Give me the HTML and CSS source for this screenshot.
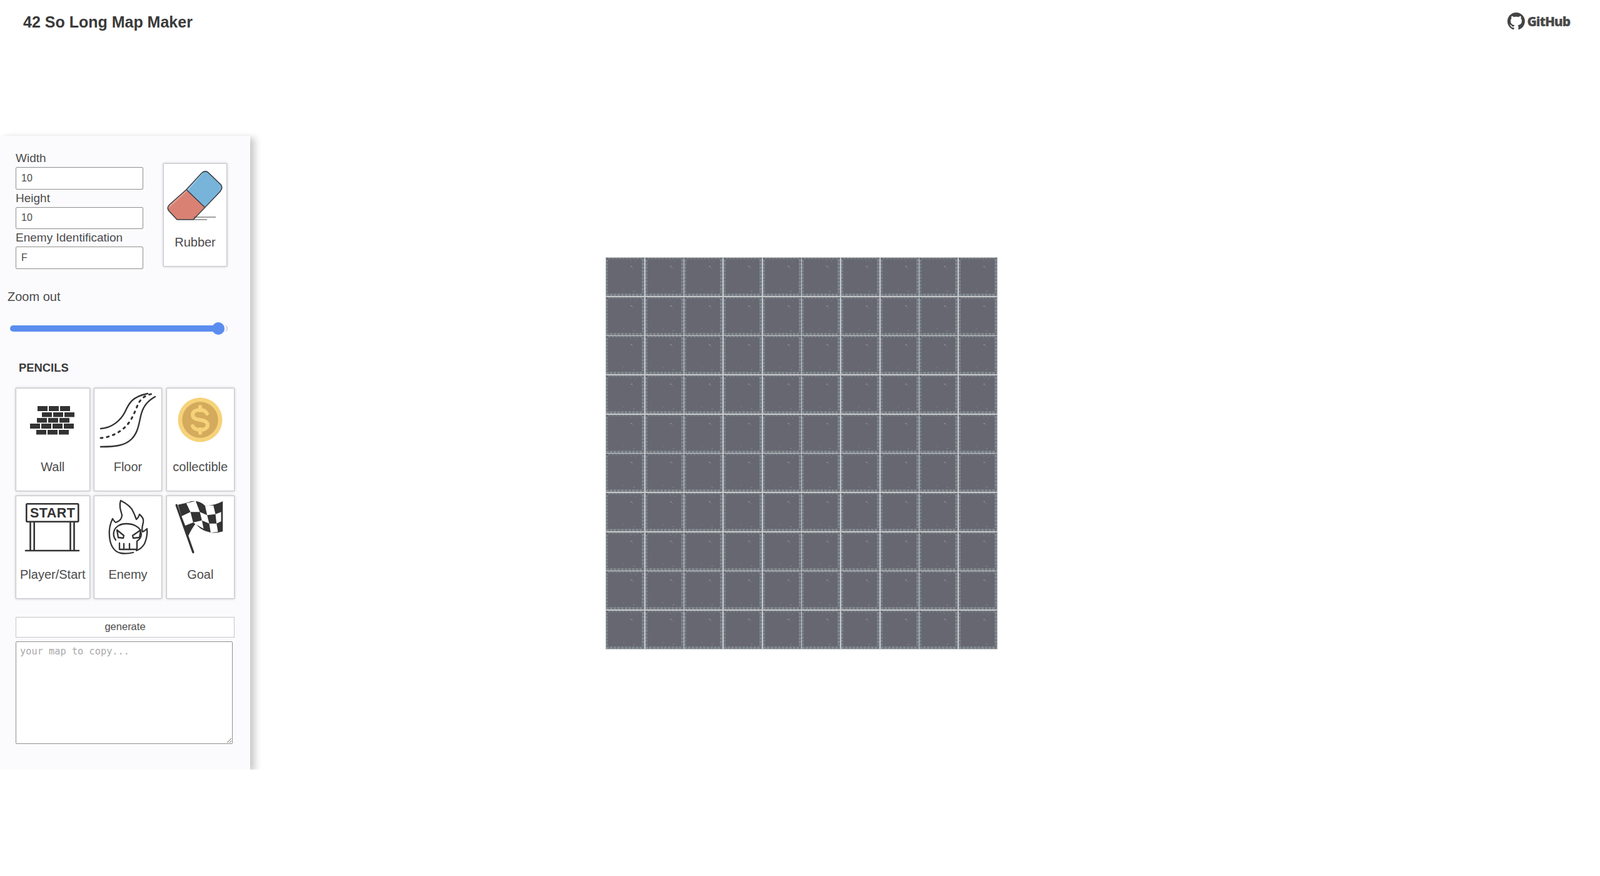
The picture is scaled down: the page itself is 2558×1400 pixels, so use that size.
FILE: index.html
```html
<!DOCTYPE html>
<html>
<head>
<title>42 So Long Map Maker</title>
<meta charset="UTF-8">
<link rel="stylesheet" href="styles.css">
</head>
<body>
  <svg class="defs" width="0" height="0">
    <symbol id="tile" viewBox="0 0 61 61">
      <rect width="61" height="61" fill="#666771"/>
      <line x1="3" y1="1" x2="60" y2="1" stroke="#787f86" stroke-width="2.5" stroke-dasharray="4 1.6"/>
      <line x1="1.5" y1="3" x2="1.5" y2="58" stroke="#7b838b" stroke-width="3" stroke-dasharray="4 1.4"/>
      <line x1="59" y1="2" x2="59" y2="56" stroke="#7f888e" stroke-width="4" stroke-dasharray="4.5 1.2"/>
      <line x1="0" y1="59" x2="61" y2="59" stroke="#838b90" stroke-width="4" stroke-dasharray="4.5 1.4"/>
      <rect x="39" y="4" width="2" height="1" fill="#7d7e88"/>
      <rect x="46" y="5" width="2" height="1" fill="#7d7e88"/>
      <rect x="39" y="13" width="3" height="2" fill="#83848d"/>
      <rect x="42" y="16" width="2" height="1" fill="#7d7e88"/>
      <rect x="10" y="23" width="1" height="1" fill="#7d7e88"/>
      <rect x="27" y="50" width="2" height="1" fill="#7d7e88"/>
      <rect x="43" y="53" width="3" height="1" fill="#83848d"/>
      <rect x="8" y="43" width="1" height="1" fill="#7d7e88"/>
    </symbol>
  </svg>

  <header class="topbar">
    <h1 class="title">42 So Long Map Maker</h1>
    <a class="github" href="#">
      <svg class="github-mark" viewBox="0 0 16 16"><path fill="#444" fill-rule="evenodd" d="M8 0C3.58 0 0 3.58 0 8c0 3.54 2.29 6.53 5.47 7.59.4.07.55-.17.55-.38 0-.19-.01-.82-.01-1.49-2.01.37-2.53-.49-2.69-.94-.09-.23-.48-.94-.82-1.13-.28-.15-.68-.52-.01-.53.63-.01 1.08.58 1.23.82.72 1.21 1.87.87 2.33.66.07-.52.28-.87.51-1.07-1.78-.2-3.64-.89-3.64-3.95 0-.87.31-1.59.82-2.15-.08-.2-.36-1.02.08-2.12 0 0 .67-.21 2.2.82.64-.18 1.32-.27 2-.27s1.36.09 2 .27c1.53-1.04 2.2-.82 2.2-.82.44 1.1.16 1.92.08 2.12.51.56.82 1.27.82 2.15 0 3.07-1.87 3.75-3.65 3.95.29.25.54.73.54 1.48 0 1.07-.01 1.93-.01 2.2 0 .21.15.46.55.38A8.01 8.01 0 0 0 16 8c0-4.42-3.58-8-8-8z"/></svg>
      <span class="github-word">GitHub</span>
    </a>
  </header>

  <main class="workspace">
    <aside class="panel">
      <div class="panel-top">
        <div class="fields">
          <label class="field-label" for="width">Width</label>
          <input class="field" id="width" type="text" value="10">
          <label class="field-label" for="height">Height</label>
          <input class="field" id="height" type="text" value="10">
          <label class="field-label" for="enemy">Enemy Identification</label>
          <input class="field" id="enemy" type="text" value="F">
        </div>
        <div class="card rubber">
          <svg class="card-icon" viewBox="0 0 100 100">
            <path d="M36 37 60 11Q65 6 70 9L91 29Q95 34 90 40L65 65Z" fill="#78b4d9"/>
            <path d="M36 37 60 11Q62 9 65 8L38 39Z" fill="#a4cde6"/>
            <path d="M36 37 9 61Q4 66 8 71L21 85H47L65 65Z" fill="#d98273"/>
            <path d="M36 37 9 61Q5 65 6 68L38 39Z" fill="#e2a196"/>
            <path d="M36 37 60 11Q65 6 70 9L91 29Q95 34 90 40L47 85H21L8 71Q4 66 9 61L36 37 65 65" fill="none" stroke="#3a3f44" stroke-width="1.6"/>
            <path d="M48 81H83M47 85H69" fill="none" stroke="#444" stroke-width="1"/>
          </svg>
          <span class="card-name">Rubber</span>
        </div>
      </div>

      <div class="zoom-label">Zoom out</div>
      <input class="zoom-slider" type="range" min="0" max="100" step="0.5" value="98.5">

      <h2 class="section-title">PENCILS</h2>
      <div class="pencils">
        <div class="card">
          <svg class="card-icon" viewBox="0 0 100 100" fill="#333">
            <rect x="26" y="24" width="16" height="8"/><rect x="44" y="24" width="16" height="8"/><rect x="62" y="24" width="16" height="8"/>
            <rect x="33" y="34" width="16" height="7.5"/><rect x="51" y="34" width="16" height="7.5"/><rect x="69" y="34" width="16" height="7.5"/>
            <rect x="25" y="43" width="16" height="7.5"/><rect x="43" y="43" width="16" height="7.5"/><rect x="61" y="43" width="16" height="7.5"/>
            <rect x="14" y="52" width="16" height="8"/><rect x="32" y="52" width="16" height="8"/><rect x="50" y="52" width="16" height="8"/><rect x="68" y="52" width="16" height="8"/>
            <rect x="24" y="62" width="16" height="7.5"/><rect x="42" y="62" width="16" height="7.5"/><rect x="60" y="62" width="16" height="7.5"/>
          </svg>
          <span class="card-name">Wall</span>
        </div>
        <div class="card">
          <svg class="card-icon" viewBox="0 0 100 100" fill="none" stroke="#333" stroke-width="2.4" stroke-linecap="round">
            <path d="M6 60C24 59 38 47 45 33 51 20 56 9 81 4"/>
            <path d="M6 89C30 89 45 87 55 77 67 65 67 50 71 36 74 25 82 15 93 9"/>
            <path d="M6 75C22 74 40 65 50 52 60 39 62 27 68 17 73 9 82 5 92 4" stroke-width="3" stroke-dasharray="3 7"/>
          </svg>
          <span class="card-name">Floor</span>
        </div>
        <div class="card">
          <svg class="card-icon" viewBox="0 0 100 100">
            <circle cx="50" cy="46" r="35.5" fill="#f6d27a"/>
            <circle cx="50" cy="46" r="28.7" fill="#d4aa5c"/>
            <path d="M61 36C58 31 54 30 50 30 43 30 38 33 38 38 38 44 44 45 50 46 56 47 62 49 62 54 62 59 57 62 50 62 45 62 40 60 38 56M50 25V31M50 61V67" fill="none" stroke="#f6d27a" stroke-width="6" stroke-linecap="round"/>
          </svg>
          <span class="card-name">collectible</span>
        </div>
        <div class="card">
          <svg class="card-icon" viewBox="0 0 100 100" fill="none" stroke="#333" stroke-width="2.6">
            <rect x="8.3" y="8.3" width="83" height="28.5" rx="1.5"/>
            <path d="M14.5 37V83M20.7 37V83M78.5 37V83M84.5 37V83"/>
            <path d="M7 83H92" stroke-linecap="round"/>
            <text class="start-word" x="50" y="30" text-anchor="middle" textLength="72">START</text>
          </svg>
          <span class="card-name">Player/Start</span>
        </div>
        <div class="card">
          <svg class="card-icon" viewBox="0 0 100 100" fill="none" stroke="#333" stroke-width="2.3" stroke-linecap="round" stroke-linejoin="round">
            <path d="M58 86C50 88 44 88 38 87 27 85 21 74 20 60 19 50 21 40 25 32 27 35 28 37 30 38 36 36 40 32 40 26 38 19 35 11 38 3 48 8 55 13 58 21 61 27 62 31 63 33 66 31 67 28 68 25 73 29 75 34 74 38 73 43 71 48 73 53 76 52 78 50 80 48 81 57 79 65 76 72 73 77 69 81 63 83"/>
            <path d="M30 66C27 62 26 57 27 53 29 44 38 40 47 40 57 40 67 44 70 52 72 58 70 64 64 68V81H36V71"/>
            <path d="M43 72V81M52 72V81"/>
            <path d="M32 50 43 59 42 63 34 62ZM70 50 57 59 58 63 68 62Z"/>
          </svg>
          <span class="card-name">Enemy</span>
        </div>
        <div class="card">
          <svg class="card-icon" viewBox="361.5 21 300 300">
            <path d="M405 50Q445 42 470 33 510 28 535 55 580 55 620 33V178Q580 190 550 180 510 170 490 140 470 165 452 205Z" fill="#333"/>
            <path d="M445 43 490 32 510 85 465 85ZM535 55 575 53 585 95 545 100ZM422 105 465 85 478 135 440 150ZM510 85 545 100 555 140 520 125ZM585 95 612 85 612 130 590 140ZM478 135 520 125 528 165 490 143ZM555 140 590 140 597 180 562 184Z" fill="#fff"/>
            <path d="M398 52 478 278" fill="none" stroke="#333" stroke-width="10" stroke-linecap="round"/>
          </svg>
          <span class="card-name">Goal</span>
        </div>
      </div>

      <button class="generate">generate</button>
      <textarea class="output" placeholder="your map to copy..."></textarea>
    </aside>

    <section class="map" id="map"></section>
  </main>

  <script src="map.js"></script>
</body>
</html>
```

FILE: styles.css
```css
* { box-sizing: border-box; }

body {
  margin: 0;
  background: #fff;
  color: #4c4c4c;
  font-family: "Liberation Sans", Arial, sans-serif;
}
.defs { position: absolute; }

.topbar {
  display: flex;
  justify-content: space-between;
  align-items: center;
  height: 70px;
  padding: 0 48px 0 37px;
}
.title {
  margin: 0;
  font-size: 25px;
  font-weight: bold;
  color: #3a3a3a;
}
.github {
  display: flex;
  align-items: center;
  gap: 4px;
  margin-bottom: 3px;
  text-decoration: none;
}
.github-mark { width: 28px; height: 28px; }
.github-word {
  font-family: "Open Sans", sans-serif;
  font-size: 21px;
  font-weight: 800;
  letter-spacing: -1.2px;
  color: #4a4a4a;
}

.workspace {
  display: flex;
  align-items: flex-start;
  margin-top: 147px;
}

.panel {
  width: 400px;
  height: 1013px;
  flex: none;
  padding: 22px 25px 0;
  background: #fbfbfd;
  box-shadow: 9px 3px 10px rgba(0, 0, 0, 0.16), 0 4px 10px rgba(0, 0, 0, 0.1);
}
.panel-top { display: flex; gap: 32px; }
.fields { width: 204px; }
.field-label {
  display: block;
  height: 28px;
  padding-top: 3px;
  font-size: 19px;
  line-height: 22px;
}
.field {
  display: block;
  width: 100%;
  height: 35.5px;
  padding: 0 8px;
  border: 1px solid #8f8f8f;
  border-radius: 2px;
  background: #fff;
  color: #4c4c4c;
  font-family: inherit;
  font-size: 16px;
}

.card {
  display: flex;
  flex-direction: column;
  align-items: center;
  height: 165px;
  padding-top: 4px;
  background: #fff;
  border: 1px solid #c6c6cc;
  box-shadow: 0 0 4px rgba(0, 0, 0, 0.24);
}
.card-icon { width: 100px; height: 100px; flex: none; }
.card-name {
  margin-top: 10px;
  font-size: 20px;
  line-height: 23px;
  white-space: nowrap;
}
.rubber { width: 102px; margin-top: 22px; }

.start-word {
  font-family: "Liberation Sans", sans-serif;
  font-size: 21.5px;
  font-weight: bold;
  fill: #333;
  stroke: none;
}

.zoom-label {
  margin: 33px 0 0 -13px;
  font-size: 20px;
  line-height: 23px;
}
.zoom-slider {
  display: block;
  width: 348px;
  height: 20px;
  margin: 29px 0 0 -9px;
  background: transparent;
  -webkit-appearance: none;
  appearance: none;
}
.zoom-slider::-webkit-slider-runnable-track {
  height: 10px;
  border-radius: 5px;
  background: linear-gradient(to right, #5b8def 0 96%, #fff 96%);
  box-shadow: inset -1.5px 0 0 #c8c8cc;
}
.zoom-slider::-webkit-slider-thumb {
  width: 20px;
  height: 20px;
  margin-top: -5px;
  border-radius: 50%;
  background: #5b8def;
  -webkit-appearance: none;
}

.section-title {
  margin: 42px 0 0 5px;
  font-size: 18.4px;
  line-height: 21px;
  color: #3a3a3a;
}
.pencils {
  display: grid;
  grid-template-columns: 118.5px 109px 109.5px;
  grid-auto-rows: 165px;
  column-gap: 6.5px;
  row-gap: 7px;
  margin-top: 22px;
}

.generate {
  display: block;
  width: 350px;
  height: 33px;
  margin-top: 29px;
  padding: 0 0 1px;
  background: #fff;
  border: 1px solid #c6c6cc;
  color: #4c4c4c;
  font-family: inherit;
  font-size: 16.5px;
}
.output {
  display: block;
  width: 347px;
  height: 164px;
  margin-top: 6px;
  padding: 6px 6px;
  border: 1px solid #8f8f8f;
  border-radius: 2px;
  background: #fff;
  font-family: "DejaVu Sans Mono", monospace;
  font-size: 15.3px;
}
.output::placeholder { color: #a9a9a9; }

.map {
  display: grid;
  grid-template-columns: repeat(10, 1fr);
  gap: 1.5px;
  width: 627px;
  height: 627px;
  margin: 194px 0 0 568px;
  padding: 1px;
  background: #c8c9cb;
}
.map-cell { display: block; width: 100%; height: 100%; }
```

FILE: map.js
```js
// fill the board with floor tiles
var map = document.getElementById("map");
var cells = "";
for (var i = 0; i < 100; i++)
  cells += '<svg class="map-cell"><use href="#tile"/></svg>';
map.innerHTML = cells;
```
